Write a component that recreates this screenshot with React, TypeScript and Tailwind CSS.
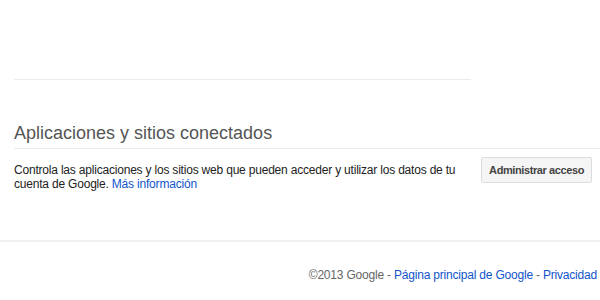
export default function App() {
  return (
    <div className="w-[600px] h-[300px] overflow-hidden bg-white font-['Liberation_Sans',Arial,sans-serif] text-[12px] tracking-[-0.2px] text-[#222]">
      <div className="pl-[14px]">
        <div className="h-[79px]" />
        <div className="w-[457px] border-t border-[#ebebeb]" />
        <h2 className="mt-[42px] pb-[4px] text-[18px] leading-[22px] tracking-normal text-[#555] font-normal border-b border-[#ebebeb]">
          Aplicaciones y sitios conectados
        </h2>
        <div className="flex items-start justify-between pr-[8px] pt-[8px]">
          <p className="mt-[6px] w-[460px] leading-[14px] text-[#222]">
            Controla las aplicaciones y los sitios web que pueden acceder y utilizar los datos de tu cuenta de Google.{' '}
            <a className="text-[#15c]">Más información</a>
          </p>
          <button className="h-[26px] px-[7px] rounded-[2px] border border-[#dcdcdc] bg-[#f5f5f5] text-[11px] tracking-[-0.4px] font-bold text-[#444]">
            Administrar acceso
          </button>
        </div>
      </div>
      <div className="mt-[49px] border-t-2 border-[#f0f0f0] flex justify-end pr-[3px] pt-[26px] leading-[14px] text-[#666]">
        <span>
          ©2013 Google - <a className="text-[#15c]">Página principal de Google</a> - <a className="text-[#15c]">Privacidad</a>
        </span>
      </div>
    </div>
  )
}
